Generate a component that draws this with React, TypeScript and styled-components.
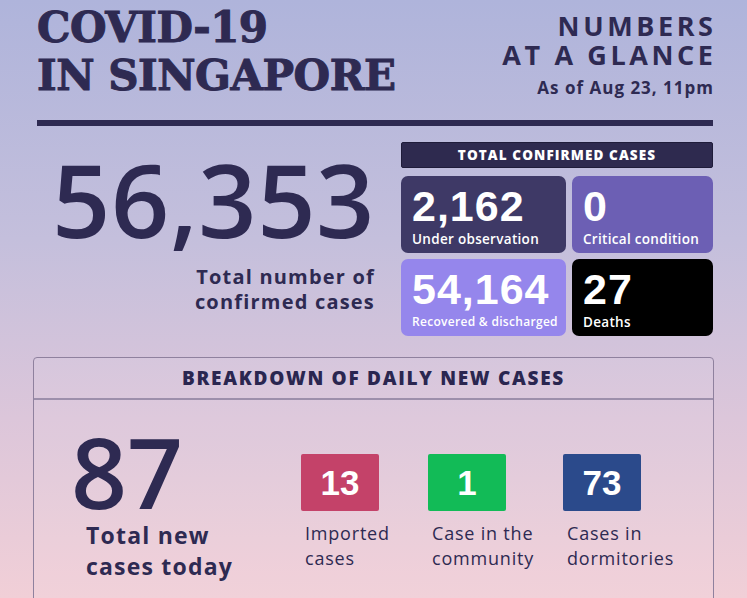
import styled, {createGlobalStyle} from "styled-components";

const GlobalStyle = createGlobalStyle`
    html, body {
        margin: 0;
        padding: 0;
    }
    body {
        font-family: "Open Sans", "Noto Sans", sans-serif;
    }
`

const StyledPage = styled.div`
    width: 747px;
    height: 598px;
    overflow: hidden;
    box-sizing: border-box;
    padding: 4px 34px 0 37px;
    background: linear-gradient(180deg, #afb4db 0%, #c4bfdc 40%, #dcc6da 70%, #f1cfd7 100%);
    color: #2e2a52;
`

const StyledHeader = styled.div`
    display: flex;
    justify-content: space-between;
    align-items: flex-start;
`

const StyledTitle = styled.h1`
    margin: 0;
    font-family: "DejaVu Serif", serif;
    font-weight: 700;
    font-size: 42px;
    line-height: 48px;
    letter-spacing: -0.5px;
    -webkit-text-stroke: 1px #2e2a52;
    color: #2e2a52;
`

const StyledGlance = styled.div`
    text-align: right;
    padding-top: 7px;
`

const StyledGlanceLine = styled.div`
    font-weight: 700;
    font-size: 27px;
    line-height: 29px;
    letter-spacing: 3.6px;
    margin-right: -3.6px;
`

const StyledDate = styled.div`
    margin-top: 9px;
    font-weight: 700;
    font-size: 17px;
    line-height: 20px;
    letter-spacing: 1px;
    margin-right: -1px;
`

const StyledRule = styled.div`
    margin-top: 20px;
    height: 6px;
    background-color: #2e2a52;
`

const StyledStats = styled.div`
    display: flex;
    gap: 26px;
    margin-top: 16px;
`

const StyledTotal = styled.div`
    width: 338px;
    text-align: right;
`

const StyledBigNumber = styled.div<{ $size: number }>`
    font-weight: 600;
    font-size: ${p => p.$size}px;
    line-height: 1;
    color: #2e2a52;
`

const StyledTotalNumber = styled(StyledBigNumber)`
    margin-top: 6px;
    letter-spacing: 0.6px;
`

const StyledTotalLabel = styled.div`
    margin-top: 14px;
    font-weight: 700;
    font-size: 20px;
    line-height: 25px;
    letter-spacing: 1.2px;
`

const StyledPanel = styled.div`
    width: 312px;
    display: flex;
    flex-direction: column;
    gap: 8px;
`

const StyledPanelTitle = styled.div`
    height: 26px;
    box-sizing: border-box;
    background-color: #2e2a4f;
    border: 1px solid #1f1c3a;
    border-radius: 2px;
    color: #fff;
    font-weight: 800;
    font-size: 13.5px;
    letter-spacing: 1.1px;
    display: flex;
    align-items: center;
    justify-content: center;
`

const StyledGrid = styled.div`
    display: grid;
    grid-template-columns: 165px 1fr;
    grid-auto-rows: 77px;
    gap: 6px;
`

const StyledCard = styled.div<{ $bg: string }>`
    background-color: ${p => p.$bg};
    border-radius: 7px;
    color: #fff;
    padding: 6px 0 0 11px;
    box-sizing: border-box;
`

const StyledCardNumber = styled.div`
    font-family: "Liberation Sans", Arial, sans-serif;
    font-weight: 700;
    font-size: 43px;
    line-height: 48px;
    letter-spacing: 1px;
`

const StyledCardLabel = styled.div<{ $small?: boolean }>`
    font-size: ${p => p.$small ? 12 : 13.5}px;
    font-weight: 600;
    letter-spacing: 0.3px;
    line-height: 18px;
    white-space: nowrap;
`

const StyledBreakdown = styled.div`
    margin: 21px -1px 0 -4px;
    border: 1px solid #8f819e;
    border-radius: 4px;
    background-color: rgba(255, 255, 255, 0.06);
    height: 300px;
`

const StyledBreakdownTitle = styled.div`
    height: 40px;
    border-bottom: 2px solid #9d8fab;
    display: flex;
    align-items: center;
    justify-content: center;
    font-weight: 800;
    font-size: 19px;
    letter-spacing: 1.7px;
    color: #2a2650;
`

const StyledBreakdownBody = styled.div`
    display: flex;
    align-items: flex-start;
    padding: 22px 0 0 37px;
`

const StyledToday = styled.div`
    width: 230px;
`

const StyledTodayLabel = styled.div`
    margin: 0 0 0 15px;
    font-weight: 700;
    font-size: 23px;
    line-height: 31px;
    letter-spacing: 1.2px;
`

const StyledItem = styled.div<{ $width: number }>`
    width: ${p => p.$width}px;
    padding-top: 32px;
`

const StyledBadge = styled.div<{ $bg: string }>`
    width: 78px;
    height: 57px;
    border-radius: 2px;
    background-color: ${p => p.$bg};
    color: #fff;
    font-family: "Liberation Sans", Arial, sans-serif;
    font-weight: 700;
    font-size: 35px;
    display: flex;
    align-items: center;
    justify-content: center;
`

const StyledItemLabel = styled.div`
    margin: 10px 0 0 4px;
    font-size: 18px;
    line-height: 25px;
    letter-spacing: 0.8px;
    color: #2e2a52;
`

const cards = [
    {value: "2,162", label: "Under observation", bg: "#3e3966"},
    {value: "0", label: "Critical condition", bg: "#6c5fb4"},
    {value: "54,164", label: "Recovered & discharged", bg: "#9586ec", small: true},
    {value: "27", label: "Deaths", bg: "#000000"},
]

const daily = [
    {value: "13", label: ["Imported", "cases"], bg: "#c44269", width: 127},
    {value: "1", label: ["Case in the", "community"], bg: "#12bb57", width: 135},
    {value: "73", label: ["Cases in", "dormitories"], bg: "#2b4a8b", width: 140},
]

export default function App() {
    return <>
        <GlobalStyle/>
        <StyledPage>
            <StyledHeader>
                <StyledTitle>COVID-19<br/>IN SINGAPORE</StyledTitle>
                <StyledGlance>
                    <StyledGlanceLine>NUMBERS</StyledGlanceLine>
                    <StyledGlanceLine>AT A GLANCE</StyledGlanceLine>
                    <StyledDate>As of Aug 23, 11pm</StyledDate>
                </StyledGlance>
            </StyledHeader>
            <StyledRule/>
            <StyledStats>
                <StyledTotal>
                    <StyledTotalNumber $size={102}>56,353</StyledTotalNumber>
                    <StyledTotalLabel>Total number of<br/>confirmed cases</StyledTotalLabel>
                </StyledTotal>
                <StyledPanel>
                    <StyledPanelTitle>TOTAL CONFIRMED CASES</StyledPanelTitle>
                    <StyledGrid>
                        {
                            cards.map(c => {
                                return <StyledCard key={c.label} $bg={c.bg}>
                                    <StyledCardNumber>{c.value}</StyledCardNumber>
                                    <StyledCardLabel $small={c.small}>{c.label}</StyledCardLabel>
                                </StyledCard>
                            })
                        }
                    </StyledGrid>
                </StyledPanel>
            </StyledStats>
            <StyledBreakdown>
                <StyledBreakdownTitle>BREAKDOWN OF DAILY NEW CASES</StyledBreakdownTitle>
                <StyledBreakdownBody>
                    <StyledToday>
                        <StyledBigNumber $size={98}>87</StyledBigNumber>
                        <StyledTodayLabel>Total new<br/>cases today</StyledTodayLabel>
                    </StyledToday>
                    {
                        daily.map(d => {
                            return <StyledItem key={d.value} $width={d.width}>
                                <StyledBadge $bg={d.bg}>{d.value}</StyledBadge>
                                <StyledItemLabel>{d.label[0]}<br/>{d.label[1]}</StyledItemLabel>
                            </StyledItem>
                        })
                    }
                </StyledBreakdownBody>
            </StyledBreakdown>
        </StyledPage>
    </>
}
